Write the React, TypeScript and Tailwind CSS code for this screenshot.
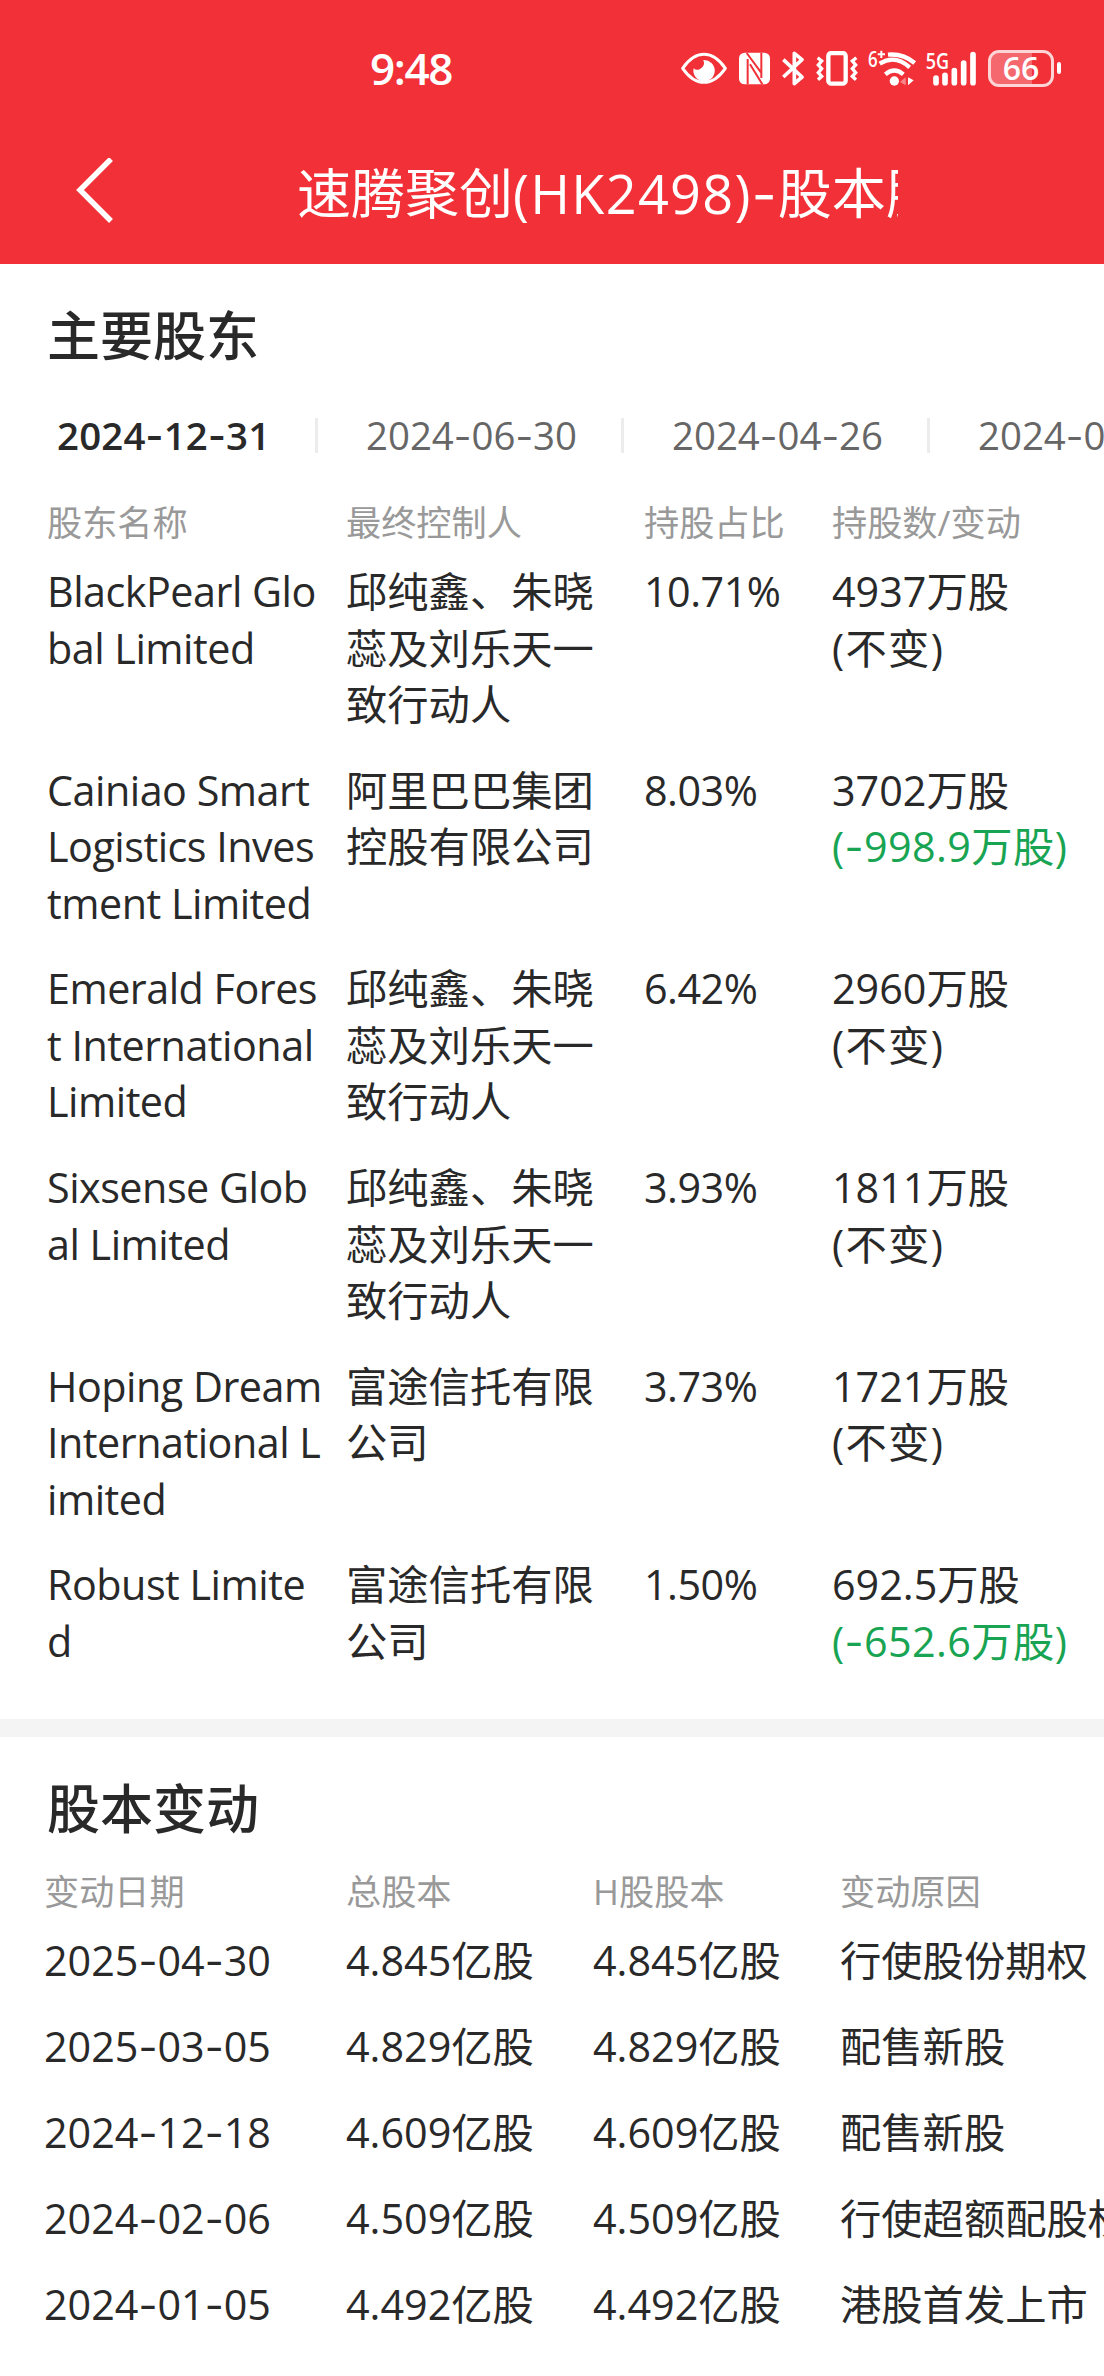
const tabs = ['2024-12-31', '2024-06-30', '2024-04-26', '2024-01-05'];

const holders = [
  { name: ['BlackPearl Glo', 'bal Limited'], owner: ['邱纯鑫、朱晓', '蕊及刘乐天一', '致行动人'], ratio: '10.71%', shares: '4937', change: null },
  { name: ['Cainiao Smart', 'Logistics Inves', 'tment Limited'], owner: ['阿里巴巴集团', '控股有限公司'], ratio: '8.03%', shares: '3702', change: '-998.9' },
  { name: ['Emerald Fores', 't International', 'Limited'], owner: ['邱纯鑫、朱晓', '蕊及刘乐天一', '致行动人'], ratio: '6.42%', shares: '2960', change: null },
  { name: ['Sixsense Glob', 'al Limited'], owner: ['邱纯鑫、朱晓', '蕊及刘乐天一', '致行动人'], ratio: '3.93%', shares: '1811', change: null },
  { name: ['Hoping Dream', 'International L', 'imited'], owner: ['富途信托有限', '公司'], ratio: '3.73%', shares: '1721', change: null },
  { name: ['Robust Limite', 'd'], owner: ['富途信托有限', '公司'], ratio: '1.50%', shares: '692.5', change: '-652.6' },
];

const changes = [
  { date: '2025-04-30', total: '4.845', h: '4.845', reason: '行使股份期权' },
  { date: '2025-03-05', total: '4.829', h: '4.829', reason: '配售新股' },
  { date: '2024-12-18', total: '4.609', h: '4.609', reason: '配售新股' },
  { date: '2024-02-06', total: '4.509', h: '4.509', reason: '行使超额配股权' },
  { date: '2024-01-05', total: '4.492', h: '4.492', reason: '港股首发上市' },
];

// Open Sans has a very short hyphen, so dashes are set in Inter
function Num({ text }: { text: string }) {
  return (
    <>
      {text.split(/(-)/).map((part, i) =>
        part === '-' ? <span key={i} className="font-['Inter'] leading-none">-</span> : part
      )}
    </>
  );
}

function Lines({ items }: { items: string[] }) {
  return (
    <>
      {items.map((line) => (
        <div key={line} className="whitespace-pre">{line}</div>
      ))}
    </>
  );
}

function StatusIcons() {
  return (
    <div className="flex h-12 items-center text-white">
      <svg className="h-[35px] w-[46px]" viewBox="60 60 138 105" fill="none">
        <path d="M65 112 Q94 70 129 70 Q164 70 193 112 Q164 154 129 154 Q94 154 65 112Z" stroke="currentColor" strokeWidth="9" strokeLinejoin="round" />
        <path d="M127 87A32 32 0 1 1 98 112Q106 120 117 114Q134 105 127 87Z" fill="currentColor" />
      </svg>
      <svg className="ml-3 h-[35px] w-[31px]" viewBox="234 60 93 105">
        <rect x="234" y="65" width="93" height="95" rx="17" fill="currentColor" />
        <path d="M260 160V84M301 65V141M257 66L300 124M267 100L304 160" fill="none" stroke="#f23037" strokeWidth="6" />
      </svg>
      <svg className="ml-3 h-[35px] w-[22px]" viewBox="363 60 66 105" fill="none">
        <path d="M367 86L423 138L400 158V67L423 86L367 138" stroke="currentColor" strokeWidth="11" strokeLinejoin="round" />
      </svg>
      <svg className="ml-3 h-[35px] w-[42px]" viewBox="465 60 126 105" fill="none" stroke="currentColor">
        <rect x="502" y="66" width="52" height="92" rx="9" strokeWidth="13" />
        <path d="M470 80L482 90L472 102L482 113L472 125L482 136L471 146M586 80L574 90L584 102L574 113L584 125L574 136L585 146" strokeWidth="10" />
      </svg>
      <svg className="ml-[10px] h-[38px] w-[48px] overflow-visible" viewBox="621 53 144 114" fill="none" stroke="currentColor">
        <text x="621" y="106" fontSize="62" fontWeight="600" textLength="29" lengthAdjust="spacingAndGlyphs" fill="currentColor" stroke="none" className="font-['Open_Sans']">6</text>
        <path d="M650 69H672M661 58V80" strokeWidth="6" />
        <path d="M681 70Q727 66 761 95M656 97Q702 68 746 108M673 129Q700 106 727 129" strokeWidth="13" />
        <circle cx="700" cy="149" r="14" fill="currentColor" stroke="none" />
        <path d="M734 138V162L717 152Z" fill="#f9878b" stroke="none" />
        <path d="M741 138V162L758 147Z" fill="currentColor" stroke="none" />
      </svg>
      <svg className="ml-[10px] h-[38px] w-[50px] overflow-visible" viewBox="795 53 150 114">
        <text x="794" y="112" fontSize="64" fontWeight="600" textLength="70" lengthAdjust="spacingAndGlyphs" fill="currentColor" className="font-['Open_Sans']">5G</text>
        <path d="M825 140V154M852 132V154M880 118V154M908 95V154M936 70V154" stroke="currentColor" strokeWidth="17" strokeLinecap="round" />
      </svg>
      <div className="ml-3 flex items-center gap-[3px]">
        <div className="flex h-[37px] w-[66px] items-center justify-center rounded-[11px] border-[3px] border-[#fdd5d7] bg-[linear-gradient(90deg,#f5686d_68%,transparent_68%)] text-[32px] font-semibold">66</div>
        <div className="h-[12px] w-1 rounded-full bg-white" />
      </div>
    </div>
  );
}

export default function App() {
  return (
    <div className="h-[2376px] w-[1104px] overflow-hidden bg-white font-['Open_Sans','Noto_Sans_CJK_SC',sans-serif] text-[41.3px] leading-[56.5px] text-[#292929]">
      <header className="h-[264px] bg-[#f23037] text-white">
        <div className="flex h-[136px] items-center pl-[370px]">
          <div className="w-[311px] text-[44px] font-semibold tracking-[-1.4px]">9:48</div>
          <StatusIcons />
        </div>
        <div className="flex h-[112px] items-center pl-[76px]">
          <svg className="h-[68px] w-[38px]" viewBox="0 0 38 68" fill="none">
            <path d="M35 1L4 32L35 63" stroke="currentColor" strokeWidth="5.5" />
          </svg>
          <h1 className="ml-[183px] w-[601px] overflow-hidden whitespace-nowrap pt-0.5 text-[54px] leading-[80px]">
            速腾聚创<span className="tracking-[1.3px]"><Num text="(HK2498)-" /></span>股本股东
          </h1>
        </div>
      </header>

      <section className="pt-8">
        <h2 className="pl-[47px] text-[53px] font-medium leading-[80px]">主要股东</h2>
        <div className="mt-[32px] flex h-[54px] items-center overflow-hidden pl-[57px] text-[38.4px] text-[#666]">
          {tabs.map((tab, i) => (
            <div key={tab} className="flex shrink-0 items-center">
              {i > 0 && <div className="mr-[48px] h-[35px] w-[3px] bg-[#ececec]" />}
              <div className={i === 0 ? 'w-[258px] font-semibold tracking-[0.2px] text-[#292929]' : 'w-[255px]'}><Num text={tab} /></div>
            </div>
          ))}
        </div>

        <div className="mt-[32px] grid h-[56px] grid-cols-[299px_298px_188px_auto] items-center pl-[47px] text-[35.2px] text-[#999]">
          <div>股东名称</div>
          <div>最终控制人</div>
          <div>持股占比</div>
          <div>持股数/变动</div>
        </div>
        <div className="mt-[13px] flex flex-col gap-[29.2px] pl-[47px]">
          {holders.map((row) => (
            <div key={row.name[0]} className="grid grid-cols-[299px_298px_188px_auto]">
              <div className="tracking-[-0.5px]"><Lines items={row.name} /></div>
              <div><Lines items={row.owner} /></div>
              <div className="tracking-[-0.5px]">{row.ratio}</div>
              <div className="whitespace-nowrap">
                <div>{row.shares}万股</div>
                {row.change ? (
                  <div className="tracking-[0.4px] text-[#18a452]">(<Num text={row.change} />万股)</div>
                ) : (
                  <div className="tracking-[1.3px]">(不变)</div>
                )}
              </div>
            </div>
          ))}
        </div>
      </section>

      <div className="mt-[50px] h-[18px] bg-[#f4f4f4]" />

      <section className="pt-8">
        <h2 className="pl-[47px] text-[53px] font-medium leading-[80px]">股本变动</h2>
        <div className="mt-[14px] grid h-[56px] grid-cols-[302px_247px_247px_auto] items-center pl-[44px] text-[35.2px] text-[#999]">
          <div>变动日期</div>
          <div>总股本</div>
          <div>H股股本</div>
          <div>变动原因</div>
        </div>
        <div className="mt-[13px] flex flex-col gap-[29.3px] pl-[44px]">
          {changes.map((row) => (
            <div key={row.date} className="grid grid-cols-[302px_247px_247px_auto] whitespace-nowrap">
              <div><Num text={row.date} /></div>
              <div>{row.total}亿股</div>
              <div>{row.h}亿股</div>
              <div>{row.reason}</div>
            </div>
          ))}
        </div>
      </section>
    </div>
  );
}
